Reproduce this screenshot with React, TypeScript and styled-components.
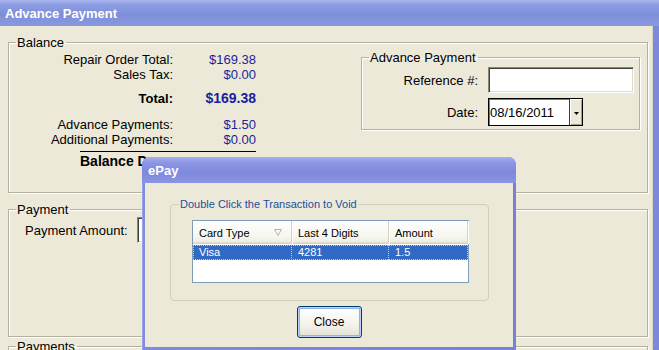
import React from 'react'
import styled, { createGlobalStyle } from 'styled-components'

const GlobalStyle = createGlobalStyle`
    html, body {
        margin: 0;
        padding: 0;
        background: #ece9d8;
        overflow: hidden;
    }
    body {
        font-family: "Liberation Sans", Arial, sans-serif;
    }
`

interface Line {
    label: string
    value: string
    top: number
    bold?: boolean
}

const totals: Line[] = [
    { label: 'Repair Order Total:', value: '$169.38', top: 2 },
    { label: 'Sales Tax:', value: '$0.00', top: 0 },
    { label: 'Total:', value: '$169.38', top: 9, bold: true },
    { label: 'Advance Payments:', value: '$1.50', top: 11 },
    { label: 'Additional Payments:', value: '$0.00', top: 0 },
]

const transactions = [{ card: 'Visa', digits: '4281', amount: '1.5' }]

const App: React.FC = () => {
    return (
        <Window>
            <GlobalStyle />
            <TitleBar>Advance Payment</TitleBar>
            <Frame>
                <GroupBox $height={158}>
                    <Legend>Balance</Legend>
                    <BalanceRow>
                        <Totals>
                            {totals.map((line, index) => (
                                <TotalRow key={index} $top={line.top} $bold={line.bold}>
                                    <Label>{line.label}</Label>
                                    <Value>{line.value}</Value>
                                </TotalRow>
                            ))}
                            <BalanceDue>Balance Due:</BalanceDue>
                        </Totals>
                        <AdvanceBox $height={80}>
                            <Legend>Advance Payment</Legend>
                            <FormGrid>
                                <FormLabel>Reference #:</FormLabel>
                                <TextInput />
                                <FormLabel>Date:</FormLabel>
                                <Combo>
                                    <ComboText>08/16/2011</ComboText>
                                    <ComboButton>
                                        <svg width="5" height="3" viewBox="0 0 5 3">
                                            <polygon points="0,0 5,0 2.5,3" fill="#000" />
                                        </svg>
                                    </ComboButton>
                                </Combo>
                            </FormGrid>
                        </AdvanceBox>
                    </BalanceRow>
                </GroupBox>
                <GroupBox $height={135} $top={9}>
                    <Legend>Payment</Legend>
                    <AmountRow>
                        <Label>Payment Amount:</Label>
                        <AmountInput />
                    </AmountRow>
                </GroupBox>
                <GroupBox $height={40} $top={2}>
                    <Legend>Payments</Legend>
                </GroupBox>
            </Frame>

            <Dialog>
                <DialogTitle>ePay</DialogTitle>
                <DialogBody>
                    <VoidBox>
                        <VoidLegend>Double Click the Transaction to Void</VoidLegend>
                        <ListView>
                            <HeaderRow>
                                <HeaderCell $width={99}>
                                    Card Type
                                    <SortMark width="8" height="7" viewBox="0 0 8 7">
                                        <polygon points="0.5,0.5 7.5,0.5 4,6.5" fill="none" stroke="#b8b4a2" />
                                    </SortMark>
                                </HeaderCell>
                                <HeaderCell $width={97}>Last 4 Digits</HeaderCell>
                                <HeaderCell $width={79}>Amount</HeaderCell>
                            </HeaderRow>
                            {transactions.map((t, index) => (
                                <DataRow key={index} $selected>
                                    <DataCell $width={99}>{t.card}</DataCell>
                                    <DataCell $width={97}>{t.digits}</DataCell>
                                    <DataCell $width={79} $last>{t.amount}</DataCell>
                                </DataRow>
                            ))}
                        </ListView>
                    </VoidBox>
                    <CloseButton>Close</CloseButton>
                </DialogBody>
            </Dialog>
        </Window>
    )
}

const Window = styled.div`
    position: relative;
    width: 659px;
    height: 350px;
    overflow: hidden;
    display: flex;
    flex-direction: column;
    background: #ece9d8;
`

const TitleBar = styled.div`
    height: 26px;
    flex: none;
    display: flex;
    align-items: center;
    padding-left: 5px;
    font-size: 13px;
    font-weight: bold;
    color: #fff;
    background: linear-gradient(to bottom, #a9b6ef 0%, #8d9de2 18%, #7e8fda 55%, #8999de 100%);
`

const Frame = styled.div`
    flex: 1;
    display: flex;
    flex-direction: column;
    padding: 9px 5px 0 8px;
    border-right: 6px solid #7c88d8;
    box-shadow: inset -1px 0 0 #d8d6c8;
`

const GroupBox = styled.fieldset<{ $height: number; $top?: number }>`
    box-sizing: border-box;
    flex: none;
    height: ${props => props.$height}px;
    margin: ${props => props.$top || 0}px 0 0 0;
    padding: 0;
    min-width: 0;
    border: 1px solid #b4b1a2;
    box-shadow: 1px 1px 0 #fff, inset 1px 1px 0 #fff;
`

const Legend = styled.legend`
    margin-left: 7px;
    padding: 0 2px 0 1px;
    font-size: 13px;
    line-height: 15px;
    color: #000;
`

const BalanceRow = styled.div`
    display: flex;
    align-items: flex-start;
`

const Totals = styled.div`
    display: flex;
    flex-direction: column;
`

const TotalRow = styled.div<{ $top: number; $bold?: boolean }>`
    display: grid;
    grid-template-columns: 164px 83px;
    margin-top: ${props => props.$top}px;
    font-size: ${props => (props.$bold ? 14 : 13)}px;
    font-weight: ${props => (props.$bold ? 'bold' : 'normal')};
    line-height: 15px;
`

const Label = styled.span`
    text-align: right;
    font-size: 13px;
    color: #000;
    white-space: nowrap;
`

const Value = styled.span`
    text-align: right;
    color: #1a1f9c;
`

const BalanceDue = styled.div`
    margin: 4px 0 0 71px;
    width: 176px;
    border-top: 1px solid #000;
    padding-top: 2px;
    font-size: 14px;
    font-weight: bold;
    line-height: 15px;
`

const AdvanceBox = styled(GroupBox)`
    width: 279px;
    margin: 0 7px 0 auto;
`

const FormGrid = styled.div`
    display: grid;
    grid-template-columns: 116px 146px;
    column-gap: 10px;
    row-gap: 5px;
    align-items: center;
    padding-top: 2px;
`

const FormLabel = styled.span`
    text-align: right;
    font-size: 13px;
    line-height: 15px;
    margin-top: 1px;
`

const sunken = `
    box-sizing: border-box;
    background: #fff;
    border-top: 1px solid #8a8779;
    border-left: 1px solid #8a8779;
    border-right: 1px solid #fff;
    border-bottom: 1px solid #fff;
    box-shadow: inset 1px 1px 0 #3f3f3f, inset -1px -1px 0 #dcdacd;
`

const TextInput = styled.div`
    ${sunken}
    height: 26px;
    width: 146px;
`

const Combo = styled.div`
    box-sizing: border-box;
    width: 95px;
    height: 28px;
    display: flex;
    background: #fff;
    border: 1px solid #000;
    box-shadow: inset 1px 1px 0 #7a7a7a;
`

const ComboText = styled.span`
    flex: 1;
    padding: 6px 0 0 1px;
    font-size: 13px;
    line-height: 15px;
    align-self: flex-start;
`

const ComboButton = styled.div`
    box-sizing: border-box;
    width: 13px;
    display: flex;
    align-items: center;
    justify-content: center;
    padding-top: 3px;
    background: #ece9d8;
    border-left: 1px solid #3b3b3b;
    box-shadow: inset 1px 1px 0 #fff, inset -1px -1px 0 #a5a290;
`

const AmountRow = styled.div`
    display: flex;
    align-items: center;
    gap: 9px;
    padding-left: 16px;
`

const AmountInput = styled.div`
    ${sunken}
    width: 130px;
    height: 26px;
`

const Dialog = styled.div`
    position: absolute;
    left: 142px;
    top: 157px;
    width: 374px;
    height: 193px;
    display: flex;
    flex-direction: column;
    border-radius: 8px 8px 0 0;
    background: linear-gradient(to right, #7f89dd, #7781d8);
    box-shadow: inset 1px 0 0 #9aa3e8;
`

const DialogTitle = styled.div`
    height: 26px;
    flex: none;
    display: flex;
    align-items: center;
    padding-left: 6px;
    border-radius: 8px 8px 0 0;
    font-size: 13px;
    font-weight: bold;
    color: #fff;
    background: linear-gradient(to bottom, #a7b0f0 0%, #8b95e4 22%, #7f89dc 60%, #8a94e2 100%);
`

const DialogBody = styled.div`
    flex: 1;
    margin: 0 3px 3px 3px;
    display: flex;
    flex-direction: column;
    align-items: center;
    padding-top: 14px;
    background: #ece9d8;
`

const VoidBox = styled.fieldset`
    box-sizing: border-box;
    align-self: flex-start;
    width: 319px;
    height: 104px;
    margin: 0 0 0 25px;
    padding: 0 0 0 21px;
    min-width: 0;
    border: 1px solid #d0d0bf;
    border-radius: 4px;
`

const VoidLegend = styled.legend`
    margin-left: -13px;
    padding: 0 1px;
    font-size: 11px;
    line-height: 14px;
    color: #1d4fa0;
`

const ListView = styled.div`
    box-sizing: border-box;
    margin-top: 9px;
    width: 277px;
    height: 63px;
    background: #fff;
    border: 1px solid #7f9db9;
`

const HeaderRow = styled.div`
    display: flex;
    height: 23px;
    background: linear-gradient(to bottom, #ffffff 0%, #f6f5ee 70%, #ebe9dc 100%);
    box-shadow: inset 0 -1px 0 #d8d5c6, inset 0 -2px 0 #e2dfd1;
`

const HeaderCell = styled.div<{ $width: number }>`
    box-sizing: border-box;
    position: relative;
    width: ${props => props.$width}px;
    display: flex;
    align-items: center;
    padding-left: 6px;
    font-size: 11px;
    color: #000;
    border-right: 1px solid #d5d2c0;
    box-shadow: 1px 0 0 #fff;
`

const SortMark = styled.svg`
    position: absolute;
    right: 9px;
    top: 8px;
`

const DataRow = styled.div<{ $selected?: boolean }>`
    box-sizing: border-box;
    display: flex;
    height: 15px;
    margin-top: 1px;
    background: ${props => (props.$selected ? '#316ac5' : 'transparent')};
    color: ${props => (props.$selected ? '#fff' : '#000')};
    outline: ${props => (props.$selected ? '1px dotted #b9cdf0' : 'none')};
    outline-offset: -1px;
`

const DataCell = styled.div<{ $width: number; $last?: boolean }>`
    box-sizing: border-box;
    width: ${props => props.$width}px;
    padding-left: 6px;
    font-size: 11px;
    line-height: 15px;
    border-right: ${props => (props.$last ? 'none' : '1px dotted #b9cdf0')};
`

const CloseButton = styled.div`
    box-sizing: border-box;
    margin-top: 5px;
    width: 65px;
    height: 32px;
    display: flex;
    align-items: center;
    justify-content: center;
    font-size: 12px;
    color: #000;
    border: 1px solid #003c74;
    border-radius: 3px;
    background: linear-gradient(to bottom, #ffffff 0%, #f3f2ec 60%, #e3e0d3 100%);
    box-shadow: inset 0 0 0 1px #b9d1f8, inset 0 0 0 2px #8fb1ec;
`

export default App
